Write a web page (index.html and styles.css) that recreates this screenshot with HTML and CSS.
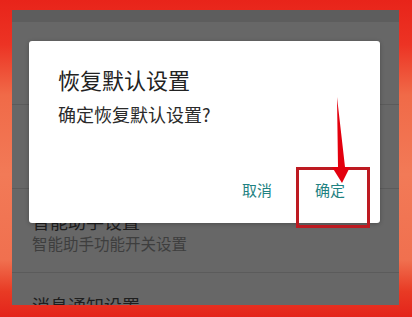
FILE: index.html
```html
<!DOCTYPE html>
<html lang="zh-CN">
<head>
    <meta charset="UTF-8">
    <meta name="viewport" content="width=device-width, initial-scale=1.0">
    <title>恢复默认设置</title>
    <link rel="stylesheet" href="styles.css">
</head>
<body>
    <div class="screen">
        <div class="appbar"></div>
        <div class="item first">
            <div class="item-title">语音播报设置</div>
            <div class="item-sub">模式选择与语音设置</div>
        </div>
        <div class="item">
            <div class="item-title">手势密码设置</div>
            <div class="item-sub">锁屏手势密码设置</div>
        </div>
        <div class="item">
            <div class="item-title">智能助手设置</div>
            <div class="item-sub">智能助手功能开关设置</div>
        </div>
        <div class="item">
            <div class="item-title">消息通知设置</div>
            <div class="item-sub">消息通知开关设置</div>
        </div>
    </div>

    <div class="dialog">
        <div class="dialog-title">恢复默认设置</div>
        <div class="dialog-body">确定恢复默认设置?</div>
        <div class="dialog-actions">
            <button class="btn">取消</button>
            <button class="btn">确定</button>
        </div>
    </div>

    <div class="highlight"></div>
    <svg class="arrow" width="412" height="317" viewBox="0 0 412 317">
        <polygon points="337,97 345,167 350,167 342,183 332,167 338,167" fill="#e3000e"/>
    </svg>
</body>
</html>
```

FILE: styles.css
```css
html, body {
    margin: 0;
    padding: 0;
}
body {
    width: 412px;
    height: 317px;
    overflow: hidden;
    position: relative;
    box-sizing: border-box;
    padding: 10px 13px 0 12px;
    font-family: "Noto Sans CJK SC", "Noto Sans", sans-serif;
    background: linear-gradient(180deg, #e8241a 0%, #ec3324 14%, #f06a48 30%, #f27a57 55%, #f0704f 82%, #e83a24 92%, #e4241b 100%);
}
.screen {
    height: 295px;
    background: #676767;
    overflow: hidden;
}
.appbar {
    height: 12px;
    background: #5d5d5d;
}
.item {
    height: 84px;
    box-sizing: border-box;
    padding: 23px 20px 0;
    border-bottom: 1px solid #5b5b5b;
}
.item.first {
    height: 83px;
}
.item-title {
    font-size: 18px;
    line-height: 18px;
    color: #1e1e1e;
}
.item-sub {
    margin-top: 5px;
    font-size: 15.5px;
    line-height: 16px;
    color: #3e3e3e;
}
.dialog {
    position: absolute;
    left: 29px;
    top: 41px;
    width: 351px;
    height: 182px;
    box-sizing: border-box;
    padding: 27px 21px 0 29px;
    background: #fff;
    border-radius: 3px;
    box-shadow: 0 1px 4px rgba(0, 0, 0, 0.25);
}
.dialog-title {
    font-size: 22px;
    line-height: 22px;
    color: #222;
}
.dialog-body {
    margin-top: 15px;
    font-size: 18px;
    line-height: 18px;
    color: #2a2a2a;
}
.dialog-actions {
    display: flex;
    justify-content: flex-end;
    gap: 15px;
    margin-top: 49px;
}
.btn {
    font-family: inherit;
    font-size: 15px;
    line-height: 15px;
    color: #1f8282;
    background: none;
    border: none;
    padding: 10px 14px;
    cursor: pointer;
}
.highlight {
    position: absolute;
    left: 296px;
    top: 167px;
    width: 74px;
    height: 61px;
    box-sizing: border-box;
    border: 3px solid #bd1a21;
}
.arrow {
    position: absolute;
    left: 0;
    top: 0;
}
```
